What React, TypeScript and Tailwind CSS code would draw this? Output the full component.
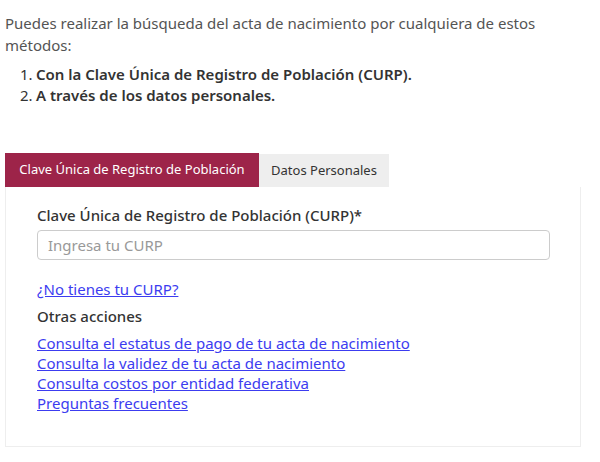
import React from "react";

export default function App() {
  const font = { fontFamily: '"Noto Sans", "Open Sans", sans-serif' };
  return (
    <div className="w-[600px] h-[462px] bg-white overflow-hidden" style={font}>
      <div className="pl-[5px] pr-[19px] pt-[12px]">
        <p className="text-[15px] leading-[22px] text-[#545454]">
          Puedes realizar la búsqueda del acta de nacimiento por cualquiera de estos métodos:
        </p>
        <ol className="mt-[8px] pl-[15px] text-[15px] leading-[21px] text-[#333]">
          <li className="flex">
            <span className="w-[16px] font-normal">1.</span>
            <span className="font-semibold">Con la Clave Única de Registro de Población (CURP).</span>
          </li>
          <li className="flex">
            <span className="w-[16px] font-normal">2.</span>
            <span className="font-semibold">A través de los datos personales.</span>
          </li>
        </ol>
        <div className="mt-[47px] w-[576px]">
          <div className="flex">
            <div className="h-[34px] w-[254px] bg-[#9D2449] text-white text-[13px] flex items-center justify-center">
              Clave Única de Registro de Población
            </div>
            <div className="h-[33px] mt-[1px] w-[130px] bg-[#eeeeee] text-[#333] text-[13px] flex items-center justify-center">
              Datos Personales
            </div>
          </div>
          <div className="border border-[#eeeeee] border-t-0 h-[260px] pl-[31px] pr-[31px] pt-[18px]">
            <div className="text-[15px] leading-[20px] font-medium text-[#333]">
              Clave Única de Registro de Población (CURP)*
            </div>
            <input
              className="mt-[5px] w-[513px] h-[30px] border border-[#cccccc] rounded-[4px] px-[10px] text-[15px] text-[#333] placeholder:text-[#999] outline-none"
              placeholder="Ingresa tu CURP"
            />
            <div className="mt-[19px] text-[15px] leading-[20px]">
              <a href="#" className="text-[#3c3cf0] underline">¿No tienes tu CURP?</a>
            </div>
            <div className="mt-[7px] text-[15px] leading-[20px] font-medium text-[#333]">Otras acciones</div>
            <div className="mt-[7px] flex flex-col text-[15px] leading-[20px] items-start">
              <a href="#" className="text-[#3c3cf0] underline">Consulta el estatus de pago de tu acta de nacimiento</a>
              <a href="#" className="text-[#3c3cf0] underline">Consulta la validez de tu acta de nacimiento</a>
              <a href="#" className="text-[#3c3cf0] underline">Consulta costos por entidad federativa</a>
              <a href="#" className="text-[#3c3cf0] underline">Preguntas frecuentes</a>
            </div>
          </div>
        </div>
      </div>
    </div>
  );
}
